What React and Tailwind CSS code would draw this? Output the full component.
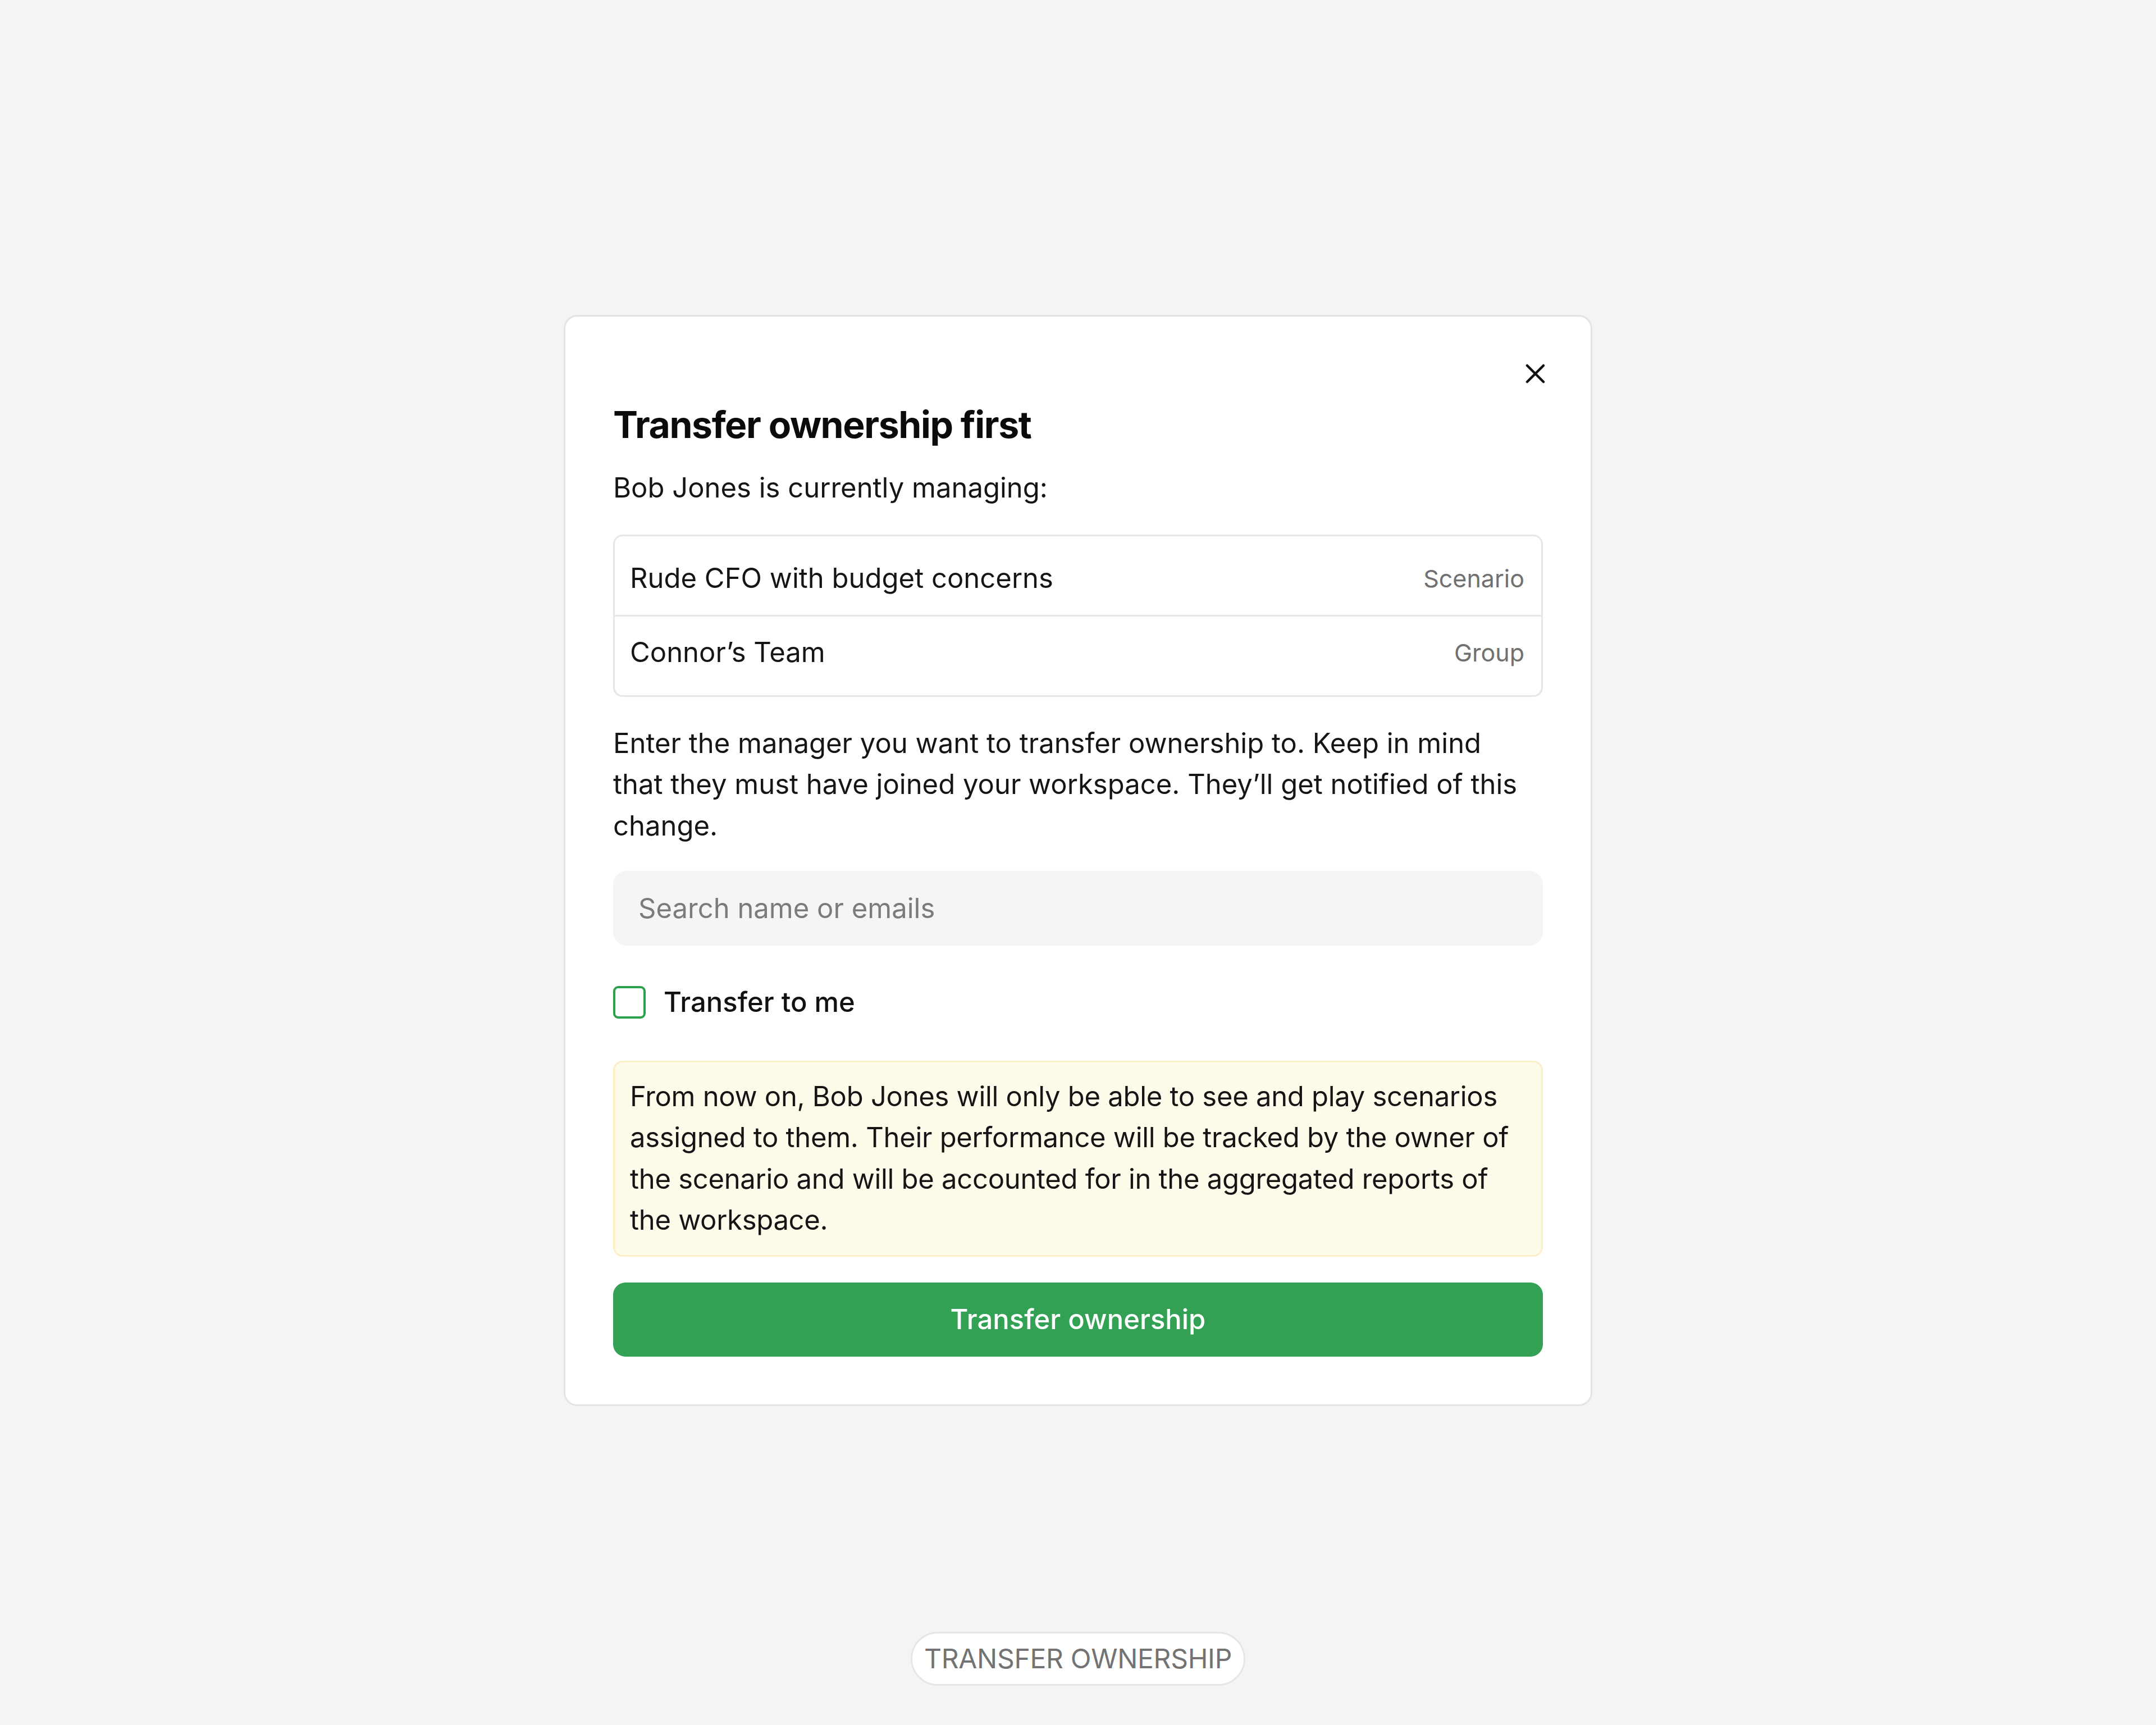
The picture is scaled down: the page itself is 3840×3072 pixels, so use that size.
export default function App() {
  const items = [
    { name: "Rude CFO with budget concerns", kind: "Scenario" },
    { name: "Connor’s Team", kind: "Group" },
  ]

  return (
    <div className="min-h-[3072px] bg-[#f4f4f2] font-[Inter,sans-serif] text-[#151515] flex flex-col items-center pt-[561px]">
      <div className="relative w-[1832px] rounded-[24px] border-[3px] border-[#e4e4e2] bg-white px-[85px] pt-[152px] pb-[85px]">
        <button className="absolute top-[84px] right-[81px] w-[35px] h-[35px] text-[#111]">
          <svg width="35" height="35" viewBox="0 0 35 35" fill="none" stroke="currentColor" strokeWidth="4.5" strokeLinecap="round">
            <path d="M3 3L32 32M32 3L3 32" />
          </svg>
        </button>

        <h1 className="text-[66px] leading-[80px] font-bold text-[#0b0b0c] tracking-[-1.4px]">Transfer ownership first</h1>
        <p className="mt-[36px] text-[49px] leading-[73.5px]">Bob Jones is currently managing:</p>

        <div className="mt-[46px] rounded-[17px] border-[3px] border-[#e6e6e4] py-[11px]">
          {items.map((item, i) => (
            <div
              key={item.name}
              className={`h-[129px] flex items-center justify-between pl-[27px] pr-[30px] ${i > 0 ? "border-t-[3px] border-[#e6e6e4] h-[132px]" : ""}`}
            >
              <span className="text-[49px]">{item.name}</span>
              <span className="text-[43px] text-[#707070]">{item.kind}</span>
            </div>
          ))}
        </div>

        <p className="mt-[46px] text-[49px] leading-[73.5px]">
          Enter the manager you want to transfer ownership to. Keep in mind
          <br />
          that they must have joined your workspace. They’ll get notified of this change.
        </p>

        <input
          type="text"
          placeholder="Search name or emails"
          className="mt-[44px] block w-full h-[133px] rounded-[24px] bg-[#f5f5f3] px-[45px] text-[49px] outline-none placeholder:text-[#7b7b7b]"
        />

        <label className="mt-[64px] flex items-center h-[73.5px] gap-[32px]">
          <span className="w-[58px] h-[58px] rounded-[9px] border-[4px] border-[#2ba14b] bg-white" />
          <span className="text-[49px] font-medium text-[#111]">Transfer to me</span>
        </label>

        <div className="mt-[67px] rounded-[17px] border-[3px] border-[#fbefc6] bg-[#fffbea] pl-[27px] pr-[27px] pt-[24px] pb-[25px]">
          <p className="text-[49px] leading-[73.5px] tracking-[-0.3px]">
            From now on, Bob Jones will only be able to see and play scenarios assigned to them. Their performance will be tracked by the owner of the scenario and will be accounted for in the aggregated reports of the workspace.
          </p>
        </div>

        <button className="mt-[46px] w-full h-[132px] rounded-[22px] bg-[#33a153] text-white text-[49px] font-medium">
          Transfer ownership
        </button>
      </div>

      <div className="mt-[402px] h-[96px] px-[21px] rounded-full border-[3px] border-[#e6e6e4] bg-white flex items-center">
        <span className="text-[48px] uppercase text-[#737373] tracking-[-0.3px]">Transfer ownership</span>
      </div>
    </div>
  )
}
